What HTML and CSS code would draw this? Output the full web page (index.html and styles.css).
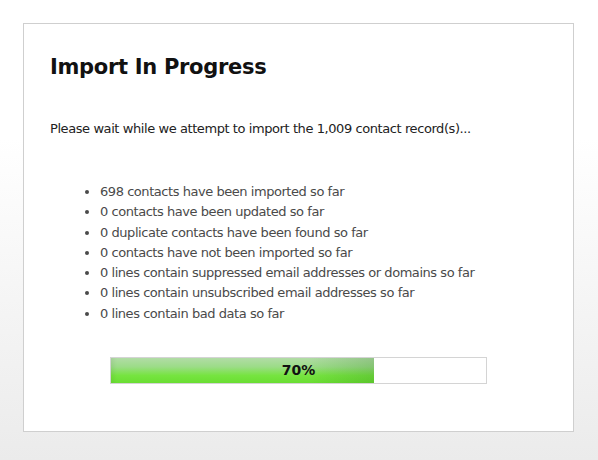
FILE: index.html
```html
<!DOCTYPE html>
<html lang="en">
<head>
    <meta charset="UTF-8">
    <meta name="viewport" content="width=device-width, initial-scale=1.0">
    <title>Import In Progress</title>
    <link rel="stylesheet" href="styles.css">
</head>
<body>
    <div class="panel">
        <h1>Import In Progress</h1>
        <p class="intro">Please wait while we attempt to import the 1,009 contact record(s)...</p>

        <ul class="stats">
            <li>698 contacts have been imported so far</li>
            <li>0 contacts have been updated so far</li>
            <li>0 duplicate contacts have been found so far</li>
            <li>0 contacts have not been imported so far</li>
            <li>0 lines contain suppressed email addresses or domains so far</li>
            <li>0 lines contain unsubscribed email addresses so far</li>
            <li>0 lines contain bad data so far</li>
        </ul>

        <div class="progress">
            <div class="progress-fill" style="width: 70%"></div>
            <span class="progress-label">70%</span>
        </div>
    </div>
</body>
</html>
```

FILE: styles.css
```css
html { height: 100%; }
body { margin: 0; min-height: 100%; padding: 23px; box-sizing: border-box; font-family: "DejaVu Sans", Verdana, sans-serif; background: linear-gradient(to bottom, #fff 0%, #fff 30%, #ebebeb 100%); }
.panel { width: 551px; height: 409px; box-sizing: border-box; background: #fff; border: 1px solid #cfcfcf; padding: 31px 26px 0; }
h1 { margin: 0; font-size: 21px; font-weight: bold; color: #111; letter-spacing: -0.3px; }
.intro { margin: 42px 0 0; font-size: 13px; color: #222; letter-spacing: -0.42px; }
.stats { margin: 46px 0 0; padding-left: 50px; font-size: 13px; line-height: 20.3px; color: #4a4a4a; letter-spacing: -0.45px; }
.progress { position: relative; margin: 33px 0 0 60px; width: 377px; height: 27px; box-sizing: border-box; border: 1px solid #d4d4d4; background: #fff; }
.progress-fill { height: 100%; background: linear-gradient(to right, rgba(0, 0, 0, 0.06) 0, rgba(0, 0, 0, 0) 6px, rgba(0, 0, 0, 0) 75%, rgba(20, 90, 10, 0.18) 100%), linear-gradient(to bottom, #b2dca6 0%, #9cdc88 35%, #76e440 70%, #6ade32 100%); }
.progress-label { position: absolute; top: 0; left: 0; right: 0; line-height: 25px; text-align: center; font-size: 14px; font-weight: bold; color: #111; }
```
